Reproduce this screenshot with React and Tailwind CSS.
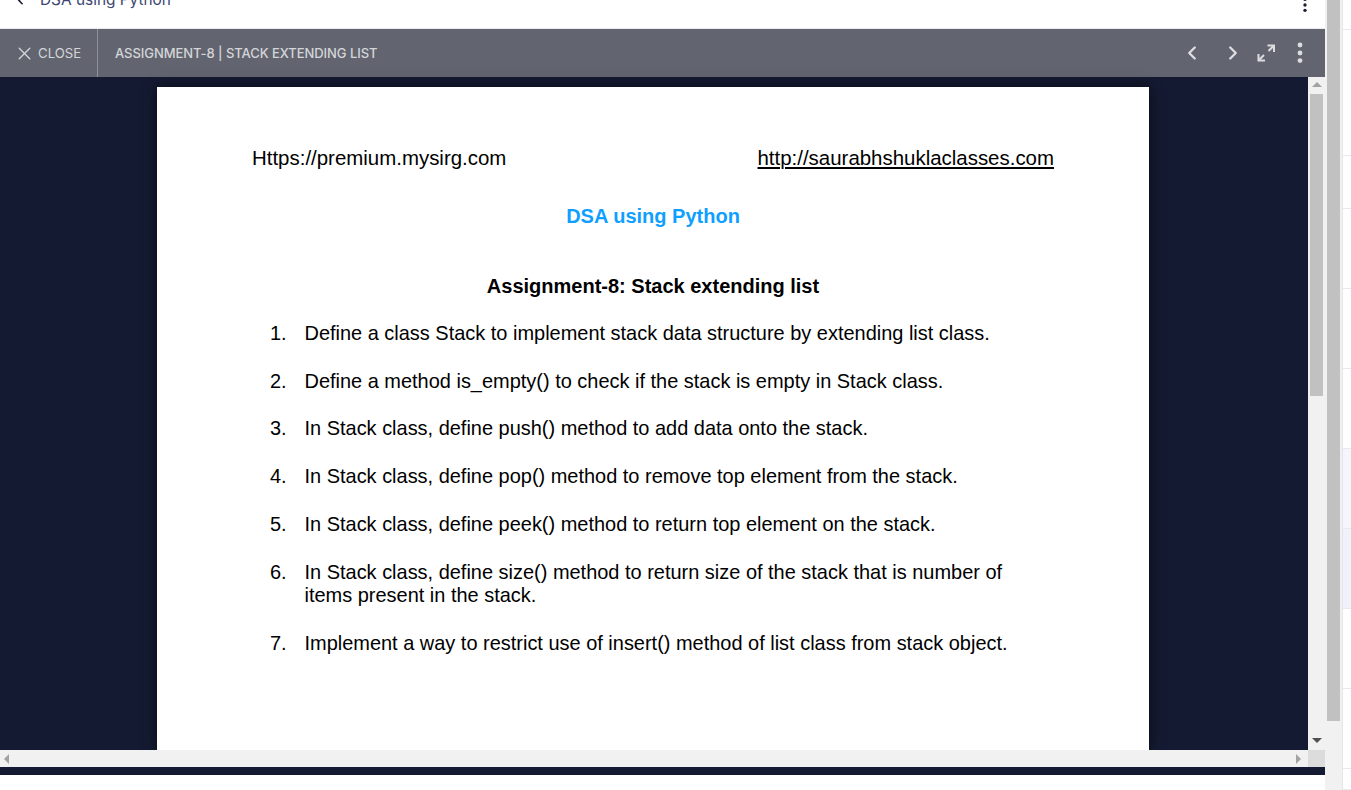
import { X, ChevronLeft, ChevronRight } from "lucide-react";

const ITEMS = [
  ["Define a class Stack to implement stack data structure by extending list class."],
  ["Define a method is_empty() to check if the stack is empty in Stack class."],
  ["In Stack class, define push() method to add data onto the stack."],
  ["In Stack class, define pop() method to remove top element from the stack."],
  ["In Stack class, define peek() method to return top element on the stack."],
  ["In Stack class, define size() method to return size of the stack that is number of", "items present in the stack."],
  ["Implement a way to restrict use of insert() method of list class from stack object."],
];

// strip on the far right, the page behind the overlay
const ROWS = [
  { h: "h-[30px]", bg: "bg-white" },
  { h: "h-[126px]", bg: "bg-white" },
  { h: "h-[53px]", bg: "bg-white" },
  { h: "h-[80px]", bg: "bg-white" },
  { h: "h-[80px]", bg: "bg-white" },
  { h: "h-[80px]", bg: "bg-white" },
  { h: "h-[80px]", bg: "bg-[#f5f6fb]" },
  { h: "h-[80px]", bg: "bg-[#f0f2f9]" },
  { h: "h-[80px]", bg: "bg-white" },
  { h: "h-[80px]", bg: "bg-white" },
  { h: "h-[21px]", bg: "bg-white" },
];

const Dots = ({ className }) => (
  <svg width="6" height="22" viewBox="0 0 6 22" className={className} fill="currentColor">
    <circle cx="3" cy="3" r="2.4" />
    <circle cx="3" cy="11" r="2.4" />
    <circle cx="3" cy="18.6" r="2.4" />
  </svg>
);

const ExpandIcon = () => (
  <svg width="20" height="20" viewBox="0 0 20 20" fill="none" stroke="#dcdde0" strokeWidth="2">
    <path d="M11.5 2.5H18V9" />
    <path d="M17.5 3L12.5 8" />
    <path d="M2.5 11V17.5H9" />
    <path d="M3 17L8 12" />
  </svg>
);

const Triangle = ({ dir, className }) => {
  const points = {
    up: "0,6 5,1 10,6",
    down: "0,1 10,1 5,6",
    left: "6,0 1,5 6,10",
    right: "1,0 6,5 1,10",
  };
  return (
    <svg width="10" height="10" viewBox="0 0 10 10" className={className} fill="currentColor">
      <polygon points={points[dir]} />
    </svg>
  );
};

const DocPage = () => (
  <div className="w-[992px] ml-[157px] mt-[10px] h-[663px] overflow-hidden bg-white text-black font-['Liberation_Sans',Arial,sans-serif] shadow-[0_0_12px_rgba(0,0,0,0.6)]">
    <div className="flex justify-between pl-[95px] pr-[95px] pt-[59px] text-[20.45px] leading-[23px]">
      <span>Https://premium.mysirg.com</span>
      <span className="underline">http://saurabhshuklaclasses.com</span>
    </div>
    <p className="mt-[36px] text-center text-[20px] leading-[23px] font-bold text-[#0f9fff]">DSA using Python</p>
    <p className="mt-[47px] text-center text-[20px] leading-[23px] font-bold">Assignment-8: Stack extending list</p>
    <ol className="mt-[24px] pl-[113px] flex flex-col gap-[24.7px] text-[19.97px] leading-[23px]">
      {ITEMS.map((lines, i) => (
        <li key={i} className={i === 5 ? "flex mt-[1px]" : "flex"}>
          <span className="w-[34.5px] shrink-0">{i + 1}.</span>
          <span>
            {lines.map((line) => (
              <span key={line} className="block whitespace-nowrap">{line}</span>
            ))}
          </span>
        </li>
      ))}
    </ol>
  </div>
);

const App = () => {
  return (
    <div className="flex w-[1351px] h-[790px] overflow-hidden bg-white">
      <div className="w-[1325px] shrink-0 flex flex-col">
        {/* page header behind the overlay, cut off at the top */}
        <div className="h-[29px] flex items-end justify-between pb-[18px] pl-[14px] pr-[17px] border-b border-[#e8eaf0] overflow-hidden">
          <div className="flex items-center gap-[13px] text-[#3c4670] font-['Inter',sans-serif] text-[15.4px] leading-[20px]">
            <ChevronLeft size={13} strokeWidth={3} className="text-[#1a1f36]" />
            <span>DSA using Python</span>
          </div>
          <Dots className="text-[#1a1f36] scale-[0.7] mb-[-6px]" />
        </div>

        {/* toolbar */}
        <div className="h-[48px] shrink-0 flex items-center bg-[#62656f] text-[#d4d5d9] font-['Inter',sans-serif]">
          <div className="h-full w-[98px] flex items-center gap-[3px] pl-[14px] border-r border-[#8f919a] text-[13.2px]">
            <X size={21} strokeWidth={1.6} />
            <span className="mt-[1px]">CLOSE</span>
          </div>
          <span className="ml-[17px] mt-[1px] text-[13px] font-medium tracking-[-0.06px]">ASSIGNMENT-8 | STACK EXTENDING LIST</span>
          <div className="ml-auto flex items-center pr-[22px]">
            <ChevronLeft size={22} strokeWidth={2.6} className="text-[#dcdde0]" />
            <ChevronRight size={22} strokeWidth={2.6} className="ml-[19px] text-[#dcdde0]" />
            <span className="ml-[12px]"><ExpandIcon /></span>
            <Dots className="ml-[21px] text-[#dcdde0]" />
          </div>
        </div>

        {/* viewer */}
        <div className="h-[690px] shrink-0 grid grid-cols-[1308px_17px] grid-rows-[673px_17px] bg-[#141a31]">
          <DocPage />
          <div className="bg-[#f1f1f1] flex flex-col items-center">
            <div className="h-[17px] flex items-center justify-center">
              <Triangle dir="up" className="text-[#a3a3a3]" />
            </div>
            <div className="w-[13px] h-[302px] bg-[#c1c1c1]" />
            <div className="mt-auto h-[17px] flex items-center justify-center">
              <Triangle dir="down" className="text-[#505050]" />
            </div>
          </div>
          <div className="bg-[#f1f1f1] flex items-center justify-between px-[3px]">
            <Triangle dir="left" className="text-[#a3a3a3]" />
            <Triangle dir="right" className="text-[#a3a3a3]" />
          </div>
          <div className="bg-[#dcdcdc]" />
        </div>
        <div className="h-[8px] shrink-0 bg-[#141a31]" />
        <div className="flex-1 bg-white" />
      </div>

      {/* browser scrollbar */}
      <div className="w-[18px] shrink-0 bg-[#f1f1f1] pl-[2px] border-r border-[#e4e6ee]">
        <div className="w-[13px] h-[721px] bg-[#c1c1c1]" />
      </div>

      <div className="flex-1 flex flex-col">
        {ROWS.map((row, i) => (
          <div key={i} className={`${row.h} ${row.bg} border-b border-[#e8eaf0]`} />
        ))}
      </div>
    </div>
  );
};

export default App;
